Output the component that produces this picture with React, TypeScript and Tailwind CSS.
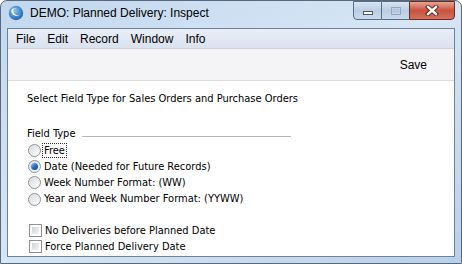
import React, { useState } from 'react';

const font = { fontFamily: '"DejaVu Sans Condensed", "Liberation Sans", sans-serif' };
const uiFont = { fontFamily: '"Liberation Sans", sans-serif' };

// Icono de la aplicación (remolino azul)
const AppIcon = () => (
  <svg width="16" height="16" viewBox="0 0 16 16">
    <defs>
      <radialGradient id="ig" cx="0.4" cy="0.35" r="0.7">
        <stop offset="0" stopColor="#8ac6f0" />
        <stop offset="1" stopColor="#1560b0" />
      </radialGradient>
    </defs>
    <circle cx="8" cy="8" r="7.2" fill="url(#ig)" />
    <path d="M3.2 6.5 C4 11 10 12.5 12.6 8.6 C11 11 6.2 10.6 5.4 6.4 C5 4.4 6.8 3 8.6 3.4 C6 2.6 3 3.8 3.2 6.5 Z" fill="#ffffff" />
  </svg>
);

const CaptionButtons = () => (
  <div className="flex h-[19px] self-start">
    <div className="w-[29px] h-full border border-[#5c6c80] rounded-bl-[4px] bg-gradient-to-b from-[#d9e6f4] via-[#b9cde3] to-[#c9daee] flex items-center justify-center">
      <div className="w-[10px] h-[4px] bg-white border border-[#4b5668] mt-[4px]" />
    </div>
    <div className="w-[27px] h-full border-y border-[#5c6c80] bg-gradient-to-b from-[#d9e6f4] via-[#b9cde3] to-[#c9daee] flex items-center justify-center">
      <div className="w-[10px] h-[8px] border border-[#98a7b8] flex items-center justify-center">
        <div className="w-[6px] h-[3px] border border-[#b4c1cf]" />
      </div>
    </div>
    <div className="w-[46px] h-full border border-[#6b2a22] rounded-br-[4px] bg-gradient-to-b from-[#e6a493] via-[#c8523f] to-[#d4705c] flex items-center justify-center">
      <svg width="14" height="11" viewBox="0 0 14 11">
        <path d="M3 2 L11 9 M11 2 L3 9" stroke="#5a1c12" strokeWidth="4.2" strokeLinecap="square" />
        <path d="M3 2 L11 9 M11 2 L3 9" stroke="#ffffff" strokeWidth="2.4" strokeLinecap="square" />
      </svg>
    </div>
  </div>
);

const Radio = ({ checked }: { checked?: boolean }) => (
  <span className="w-[13px] h-[13px] rounded-full border border-[#8e9296] bg-gradient-to-br from-[#dcdcdc] to-[#fbfbfb] flex items-center justify-center shrink-0">
    {checked && <span className="w-[7px] h-[7px] rounded-full bg-gradient-to-br from-[#8ec2f2] via-[#2b6fc4] to-[#0d3f86]" />}
  </span>
);

const Checkbox = () => (
  <span className="w-[13px] h-[13px] border border-[#8e9296] bg-white p-[2px] shrink-0">
    <span className="block w-full h-full bg-gradient-to-br from-[#d2d2d2] to-[#f6f6f6]" />
  </span>
);

const App: React.FC = () => {
  const [fieldType, setFieldType] = useState('date');

  const options = [
    { id: 'free', label: 'Free' },
    { id: 'date', label: 'Date (Needed for Future Records)' },
    { id: 'week', label: 'Week Number Format: (WW)' },
    { id: 'yearweek', label: 'Year and Week Number Format: (YYWW)' },
  ];

  return (
    <div
      className="w-[462px] h-[264px] overflow-hidden rounded-t-[7px] border border-[#59697c] bg-gradient-to-br from-[#c2d7ee] via-[#d7e6f5] to-[#b9d0ea] flex flex-col text-[#000]"
      style={font}
    >
      {/* Barra de título */}
      <div className="h-[27px] flex items-start pl-[7px] pr-[6px] shrink-0">
        <div className="flex items-center h-[24px] gap-[6px]">
          <AppIcon />
          <span className="text-[12px] text-black" style={uiFont}>
            DEMO: Planned Delivery: Inspect
          </span>
        </div>
        <div className="flex-1" />
        <CaptionButtons />
      </div>

      {/* Área de cliente */}
      <div className="flex-1 mx-[6px] mb-[6px] border border-[#6f8194] bg-white flex flex-col min-h-0">
        <nav className="h-[19px] bg-gradient-to-b from-[#e9eef7] to-[#dae2ef] flex items-center px-[8px] gap-[12px] text-[12px] shrink-0" style={uiFont}>
          <span>File</span>
          <span>Edit</span>
          <span>Record</span>
          <span>Window</span>
          <span>Info</span>
        </nav>
        <div className="h-[33px] bg-[#f4f4f6] border-t border-[#c9d0dc] border-b border-b-[#dcdcdc] flex items-center justify-end pr-[27px] text-[12px] shrink-0">
          <span style={uiFont}>Save</span>
        </div>

        <main className="flex-1 pl-[19px] pt-[10px] text-[11px] leading-[16px]">
          <div>Select Field Type for Sales Orders and Purchase Orders</div>

          <div className="mt-[19px] flex items-center">
            <span>Field Type</span>
            <span className="ml-[7px] w-[209px] h-px bg-[#b8b8b8] mt-[5px]" />
          </div>

          <div className="flex flex-col">
            {options.map((o) => (
              <label key={o.id} className="flex items-center h-[16.4px] gap-[2px] pl-[1px]" onClick={() => setFieldType(o.id)}>
                <Radio checked={fieldType === o.id} />
                <span className={o.id === 'free' ? 'outline outline-1 outline-dotted outline-[#333] px-[1px] leading-[13px]' : 'pl-[1px]'}>{o.label}</span>
              </label>
            ))}
          </div>

          <div className="flex flex-col mt-[15px]">
            <label className="flex items-center gap-[3px] pl-[2px] h-[16px]">
              <Checkbox />
              <span>No Deliveries before Planned Date</span>
            </label>
            <label className="flex items-center gap-[3px] pl-[2px] h-[16px]">
              <Checkbox />
              <span>Force Planned Delivery Date</span>
            </label>
          </div>
        </main>
      </div>
    </div>
  );
};

export default App;
